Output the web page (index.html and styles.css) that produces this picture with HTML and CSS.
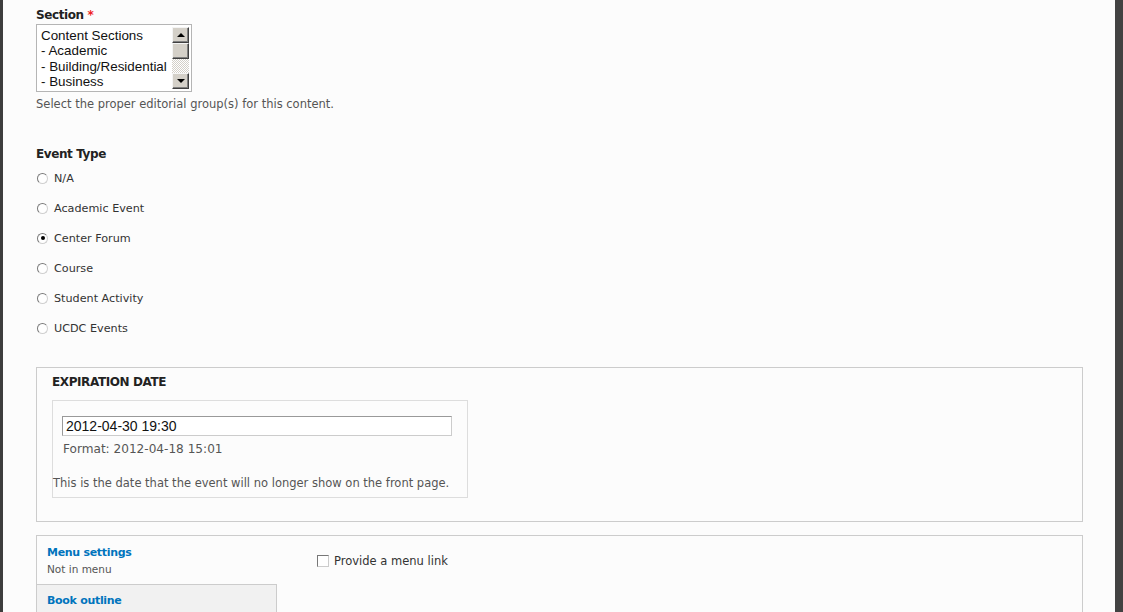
FILE: index.html
```html
<!DOCTYPE html>
<html lang="en">
<head>
    <meta charset="UTF-8">
    <title>Edit Event</title>
    <link rel="stylesheet" href="styles.css">
</head>
<body>
    <div class="page">
        <div class="form-item">
            <label class="form-label">Section <span class="required">*</span></label>
            <div class="listbox">
                <div class="options">
                    <div>Content Sections</div>
                    <div>- Academic</div>
                    <div>- Building/Residential</div>
                    <div>- Business</div>
                </div>
                <div class="scrollbar">
                    <div class="sb-btn up"><span class="arrow-up"></span></div>
                    <div class="sb-thumb"></div>
                    <div class="sb-track"></div>
                    <div class="sb-btn down"><span class="arrow-down"></span></div>
                </div>
            </div>
            <div class="description">Select the proper editorial group(s) for this content.</div>
        </div>

        <div class="form-item event-type">
            <label class="form-label">Event Type</label>
            <div class="radios">
                <div class="radio-row"><span class="radio"></span>N/A</div>
                <div class="radio-row"><span class="radio"></span>Academic Event</div>
                <div class="radio-row"><span class="radio checked"></span>Center Forum</div>
                <div class="radio-row"><span class="radio"></span>Course</div>
                <div class="radio-row"><span class="radio"></span>Student Activity</div>
                <div class="radio-row"><span class="radio"></span>UCDC Events</div>
            </div>
        </div>

        <div class="fieldset">
            <div class="fieldset-title">EXPIRATION DATE</div>
            <div class="date-box">
                <input class="date-input" type="text" value="2012-04-30 19:30">
                <div class="format">Format: 2012-04-18 15:01</div>
                <div class="description">This is the date that the event will no longer show on the front page.</div>
            </div>
        </div>

        <div class="vtabs">
            <ul class="tab-list">
                <li class="tab selected">
                    <a href="#">Menu settings</a>
                    <span class="summary">Not in menu</span>
                </li>
                <li class="tab">
                    <a href="#">Book outline</a>
                </li>
            </ul>
            <div class="tab-pane">
                <label class="check-row"><span class="checkbox"></span>Provide a menu link</label>
            </div>
        </div>
    </div>
</body>
</html>
```

FILE: styles.css
```css
html, body {
    margin: 0;
    padding: 0;
    height: 100%;
    overflow: hidden;
}

body {
    font-family: "DejaVu Sans", Verdana, sans-serif;
    font-size: 12px;
    color: #333;
    background: #fcfcfc;
}

.page {
    box-sizing: border-box;
    height: 612px;
    border-left: 3px solid #3d3d3d;
    border-right: 8px solid #424242;
    padding: 6px 32px 0 33px;
    background: #fcfcfc;
}

.form-label {
    display: block;
    font-weight: bold;
    font-size: 12px;
    letter-spacing: -0.4px;
    line-height: 18px;
    color: #222;
    margin-bottom: 0;
}

.required {
    color: #e22;
}

.description {
    font-size: 11.5px;
    line-height: 18px;
    color: #555;
    margin-top: 3px;
}

/* fake multi-select */
.listbox {
    box-sizing: border-box;
    width: 156px;
    height: 68px;
    border: 1px solid #b5b5b5;
    background: #fff;
    display: flex;
    padding: 2px 2px 2px 0;
}

.options {
    flex: 1;
    font-family: "Liberation Sans", Arial, sans-serif;
    font-size: 13.4px;
    line-height: 15.3px;
    color: #111;
    padding: 1px 0 0 4px;
    white-space: nowrap;
    overflow: hidden;
}

.scrollbar {
    width: 17px;
    display: flex;
    flex-direction: column;
}

.sb-btn, .sb-thumb {
    box-sizing: border-box;
    height: 16px;
    background: #d4d0c8;
    border: 1px solid;
    border-color: #f4f4f4 #404040 #404040 #f4f4f4;
    box-shadow: inset -1px -1px 0 #808080;
    display: flex;
    align-items: center;
    justify-content: center;
}

.sb-track {
    flex: 1;
    background-color: #fff;
    background-image: repeating-conic-gradient(#d4d0c8 0 25%, #fff 0 50%);
    background-size: 2px 2px;
}

.arrow-up {
    width: 0;
    height: 0;
    border-left: 4px solid transparent;
    border-right: 4px solid transparent;
    border-bottom: 4px solid #000;
}

.arrow-down {
    width: 0;
    height: 0;
    border-left: 4px solid transparent;
    border-right: 4px solid transparent;
    border-top: 4px solid #000;
}

/* event type radios */
.event-type {
    margin-top: 32px;
}

.radios {
    margin-top: 0;
}

.radio-row {
    height: 30px;
    display: flex;
    align-items: center;
    font-size: 11.2px;
    color: #333;
}

.radio {
    box-sizing: border-box;
    width: 11px;
    height: 11px;
    border-radius: 50%;
    border: 1px solid;
    border-color: #7a7a7a #d0d0d0 #d0d0d0 #7a7a7a;
    background: #fff;
    margin: 0 6px 0 1px;
    display: flex;
    align-items: center;
    justify-content: center;
}

.radio.checked::after {
    content: "";
    width: 4px;
    height: 4px;
    border-radius: 50%;
    background: #000;
}

/* expiration date fieldset */
.fieldset {
    margin-top: 24px;
    border: 1px solid #ccc;
    padding: 5px 15px 23px 15px;
}

.fieldset-title {
    font-weight: bold;
    font-size: 12px;
    line-height: 18px;
    color: #222;
    letter-spacing: -0.4px;
}

.date-box {
    box-sizing: border-box;
    width: 416px;
    margin-top: 9px;
    border: 1px solid #ddd;
    padding: 15px 0 5px 0;
}

.date-input {
    display: block;
    box-sizing: border-box;
    width: 390px;
    height: 20px;
    margin-left: 9px;
    border: 1px solid;
    border-color: #999 #ccc #ccc #999;
    padding: 0 3px;
    font-family: "Liberation Sans", Arial, sans-serif;
    font-size: 14px;
    color: #111;
    background: #fff;
}

.format {
    font-size: 12.1px;
    line-height: 18px;
    color: #555;
    margin: 4px 0 0 10px;
}

.date-box .description {
    margin-top: 16px;
}

/* vertical tabs */
.vtabs {
    margin-top: 13px;
    border: 1px solid #ccc;
    display: flex;
    height: 100px;
    background: #fcfcfc;
}

.tab-list {
    list-style: none;
    margin: 0;
    padding: 0;
    width: 240px;
}

.tab {
    box-sizing: border-box;
    padding: 8px 10px 8px 10px;
    background: #f1f1f1;
    border-right: 1px solid #ccc;
    border-top: 1px solid #ccc;
    line-height: 16px;
}

.tab.selected {
    background: #fcfcfc;
    border-right: none;
    border-top: none;
    height: 48px;
    padding-top: 9px;
}

.tab a {
    display: block;
    color: #0074bd;
    font-weight: bold;
    font-size: 11px;
    text-decoration: none;
    letter-spacing: -0.3px;
}

.summary {
    display: block;
    font-size: 10.5px;
    color: #555;
}

.tab-pane {
    flex: 1;
    padding: 18px 0 0 40px;
}

.check-row {
    display: flex;
    align-items: center;
    font-size: 11.5px;
    color: #333;
}

.checkbox {
    box-sizing: border-box;
    width: 12px;
    height: 12px;
    border: 1px solid;
    border-color: #777 #ccc #ccc #777;
    background: #fff;
    margin-right: 5px;
}
```
